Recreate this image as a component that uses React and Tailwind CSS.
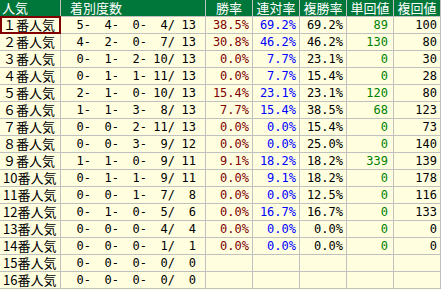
import React from 'react';

const rows = [
  ['１番人気', [5, 4, 0, 4, 13], '38.5%', '69.2%', '69.2%', '89', '100'],
  ['２番人気', [4, 2, 0, 7, 13], '30.8%', '46.2%', '46.2%', '130', '80'],
  ['３番人気', [0, 1, 2, 10, 13], '0.0%', '7.7%', '23.1%', '0', '30'],
  ['４番人気', [0, 1, 1, 11, 13], '0.0%', '7.7%', '15.4%', '0', '28'],
  ['５番人気', [2, 1, 0, 10, 13], '15.4%', '23.1%', '23.1%', '120', '80'],
  ['６番人気', [1, 1, 3, 8, 13], '7.7%', '15.4%', '38.5%', '68', '123'],
  ['７番人気', [0, 0, 2, 11, 13], '0.0%', '0.0%', '15.4%', '0', '73'],
  ['８番人気', [0, 0, 3, 9, 12], '0.0%', '0.0%', '25.0%', '0', '140'],
  ['９番人気', [1, 1, 0, 9, 11], '9.1%', '18.2%', '18.2%', '339', '139'],
  ['10番人気', [0, 1, 1, 9, 11], '0.0%', '9.1%', '18.2%', '0', '178'],
  ['11番人気', [0, 0, 1, 7, 8], '0.0%', '0.0%', '12.5%', '0', '116'],
  ['12番人気', [0, 1, 0, 5, 6], '0.0%', '16.7%', '16.7%', '0', '133'],
  ['13番人気', [0, 0, 0, 4, 4], '0.0%', '0.0%', '0.0%', '0', '0'],
  ['14番人気', [0, 0, 0, 1, 1], '0.0%', '0.0%', '0.0%', '0', '0'],
  ['15番人気', [0, 0, 0, 0, 0], '', '', '', '', ''],
  ['16番人気', [0, 0, 0, 0, 0], '', '', '', '', ''],
];

const cols = 'grid grid-cols-[61px_145px_47px_47px_47px_47px_47px]';
const jp = "font-['Noto_Sans_CJK_JP',sans-serif]";
const num = "font-['DejaVu_Sans_Mono',monospace] text-[12px]";

export default function App() {
  return (
    <div className="w-[441px] h-[290px] bg-[#ffffe0] overflow-hidden">
      {/* ヘッダー */}
      <div className={`${cols} h-[17px] bg-[#00773a] border-b border-[#c0c0c0] text-white text-[13px] leading-[16px] whitespace-nowrap ${jp}`}>
        <div className="border-r border-[#c0c0c0] pl-[2px]">人気</div>
        <div className="border-r border-[#c0c0c0] pl-[9px]">着別度数</div>
        <div className="border-r border-[#c0c0c0] text-center">勝率</div>
        <div className="border-r border-[#c0c0c0] text-center">連対率</div>
        <div className="border-r border-[#c0c0c0] text-center">複勝率</div>
        <div className="border-r border-[#c0c0c0] text-center">単回値</div>
        <div className="border-r border-[#c0c0c0] text-center">複回値</div>
      </div>

      {rows.map((r, i) => (
        <div key={i} className={`${cols} h-[17px] border-b border-[#c0c0c0] leading-[16px] whitespace-nowrap`}>
          <div className={`relative border-r border-[#c0c0c0] pl-[3px] text-[13px] text-black ${jp}`}>
            {r[0]}
            {i === 0 && <div className="absolute -top-px left-0 -right-px -bottom-px border-2 border-[#800000]" />}
          </div>
          <div className={`flex border-r border-[#c0c0c0] pl-[2px] text-black ${num}`}>
            <span className="w-[28px] text-right">{r[1][0]}-</span>
            <span className="w-[28px] text-right">{r[1][1]}-</span>
            <span className="w-[28px] text-right">{r[1][2]}-</span>
            <span className="w-[28px] text-right">{r[1][3]}/</span>
            <span className="w-[21px] text-right">{r[1][4]}</span>
          </div>
          <div className={`border-r border-[#c0c0c0] pr-[3px] text-right text-[#800000] ${num}`}>{r[2]}</div>
          <div className={`border-r border-[#c0c0c0] pr-[3px] text-right text-[#0000ff] ${num}`}>{r[3]}</div>
          <div className={`border-r border-[#c0c0c0] pr-[3px] text-right text-black ${num}`}>{r[4]}</div>
          <div className={`border-r border-[#c0c0c0] pr-[5px] text-right text-[#008000] ${num}`}>{r[5]}</div>
          <div className={`border-r border-[#c0c0c0] pr-[3px] text-right text-black ${num}`}>{r[6]}</div>
        </div>
      ))}
    </div>
  );
}
